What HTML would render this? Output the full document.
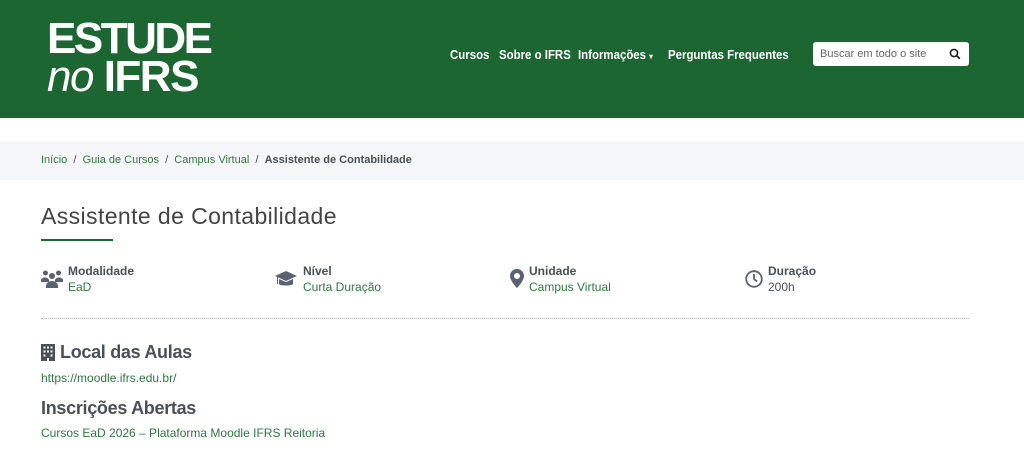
<!DOCTYPE html>
<html><head><meta charset="utf-8"><style>
*{margin:0;padding:0;box-sizing:border-box}
body{width:1024px;height:470px;background:#fff;font-family:"Liberation Sans",sans-serif;color:#495057;position:relative;overflow:hidden}
.a{position:absolute;white-space:nowrap}
.hdr{position:absolute;left:0;top:0;width:1024px;height:118px;background:#1b6631}
.logo1{left:47px;top:14px;font-size:44px;font-weight:bold;color:#fff;letter-spacing:-2.5px;line-height:50px}
.logo2{left:47px;top:52px;font-size:44px;color:#fff;line-height:50px;letter-spacing:-1.5px}
.logo2 i{font-weight:normal}
.logo2 b{font-weight:bold}
.nav{top:47px;font-size:13px;font-weight:bold;color:#fff;transform:scaleX(0.88);transform-origin:left top}
.search{position:absolute;left:813px;top:42px;width:156px;height:24px;background:#fff;border-radius:3px}
.search span{position:absolute;left:7px;top:6px;font-size:11px;color:#666}
.bc{position:absolute;left:0;top:142px;width:1024px;height:38px;background:#f5f6f7}
.bct{top:154px;font-size:11px}
.g{color:#2e7a3f}
h1{position:absolute;left:41px;top:203px;font-size:23px;font-weight:normal;color:#444;white-space:nowrap;letter-spacing:0.4px}
.ul{position:absolute;left:41px;top:239px;width:72px;height:2px;background:#1b6631}
.lbl{top:264px;font-size:12px;font-weight:bold;color:#495057}
.val{top:280px;font-size:12px;color:#2e7a3f}
.dot{position:absolute;left:41px;top:318px;width:928px;border-top:1px dotted #bbb}
h2{position:absolute;left:41px;font-size:18px;font-weight:bold;color:#495057;white-space:nowrap;letter-spacing:-0.3px}
.lk{left:41px;font-size:12px;color:#2e7a3f}
</style></head><body>
<div class="hdr"></div>
<div class="a logo1">ESTUDE</div>
<div class="a logo2"><i>no</i> <b>IFRS</b></div>
<div class="a nav" style="left:450px">Cursos</div>
<div class="a nav" style="left:499px">Sobre o IFRS</div>
<div class="a nav" style="left:578px">Informações <span style="font-size:8px">▾</span></div>
<div class="a nav" style="left:668px">Perguntas Frequentes</div>
<div class="search"><span>Buscar em todo o site</span>
<svg style="position:absolute;left:136px;top:6px" width="12" height="12" viewBox="0 0 12 12"><circle cx="5" cy="5" r="3.6" fill="none" stroke="#222" stroke-width="1.6"/><line x1="7.6" y1="7.6" x2="10.8" y2="10.8" stroke="#222" stroke-width="1.8"/></svg></div>
<div class="bc"></div>
<div class="a bct" style="left:41px"><span class="g">Início</span> &nbsp;/&nbsp; <span class="g">Guia de Cursos</span> &nbsp;/&nbsp; <span class="g">Campus Virtual</span> &nbsp;/&nbsp; <b>Assistente de Contabilidade</b></div>
<h1>Assistente de Contabilidade</h1>
<div class="ul"></div>

<svg class="a" style="left:41px;top:269px" width="22" height="20" viewBox="0 0 22 20" fill="#5a6270"><circle cx="4.5" cy="4" r="2.5"/><circle cx="17.5" cy="4" r="2.5"/><circle cx="11" cy="7" r="3"/><path d="M0 12a4 3 0 0 1 8-1v2H0z"/><path d="M14 11a4 3 0 0 1 8 1v1h-8z"/><path d="M5 19v-2a6 5 0 0 1 12 0v2z"/></svg>
<div class="a lbl" style="left:68px">Modalidade</div><div class="a val" style="left:68px">EaD</div>

<svg class="a" style="left:275px;top:270px" width="22" height="18" viewBox="0 0 22 18" fill="#5a6270"><path d="M11 1L0 6l11 5 11-5z"/><path d="M4 9v5c0 2 14 2 14 0V9l-7 3z"/><rect x="2" y="7" width="1" height="7"/></svg>
<div class="a lbl" style="left:303px">Nível</div><div class="a val" style="left:303px">Curta Duração</div>

<svg class="a" style="left:510px;top:269px" width="14" height="19" viewBox="0 0 14 19" fill="#5a6270"><path d="M7 0a7 7 0 0 0-7 7c0 5 7 12 7 12s7-7 7-12a7 7 0 0 0-7-7zm0 10a3 3 0 1 1 0-6 3 3 0 0 1 0 6z"/></svg>
<div class="a lbl" style="left:529px">Unidade</div><div class="a val" style="left:529px">Campus Virtual</div>

<svg class="a" style="left:745px;top:270px" width="18" height="18" viewBox="0 0 18 18"><circle cx="9" cy="9" r="7.8" fill="none" stroke="#5a6270" stroke-width="1.8"/><path d="M9 4v5l3 2.5" fill="none" stroke="#5a6270" stroke-width="1.8"/></svg>
<div class="a lbl" style="left:768px">Duração</div><div class="a val" style="left:768px;color:#495057">200h</div>

<div class="dot"></div>
<svg class="a" style="left:41px;top:344px" width="14" height="17" viewBox="0 0 14 17" fill="#495057"><path d="M0 0h14v17H8v-3H6v3H0z"/><g fill="#fff"><rect x="2.5" y="2.5" width="2" height="2"/><rect x="6" y="2.5" width="2" height="2"/><rect x="9.5" y="2.5" width="2" height="2"/><rect x="2.5" y="6.5" width="2" height="2"/><rect x="6" y="6.5" width="2" height="2"/><rect x="9.5" y="6.5" width="2" height="2"/><rect x="2.5" y="10.5" width="2" height="2"/><rect x="9.5" y="10.5" width="2" height="2"/></g></svg>
<h2 style="left:60px;top:342px">Local das Aulas</h2>
<div class="a lk" style="top:371px">https://moodle.ifrs.edu.br/</div>
<h2 style="top:398px">Inscrições Abertas</h2>
<div class="a lk" style="top:426px">Cursos EaD 2026 – Plataforma Moodle IFRS Reitoria</div>
</body></html>
